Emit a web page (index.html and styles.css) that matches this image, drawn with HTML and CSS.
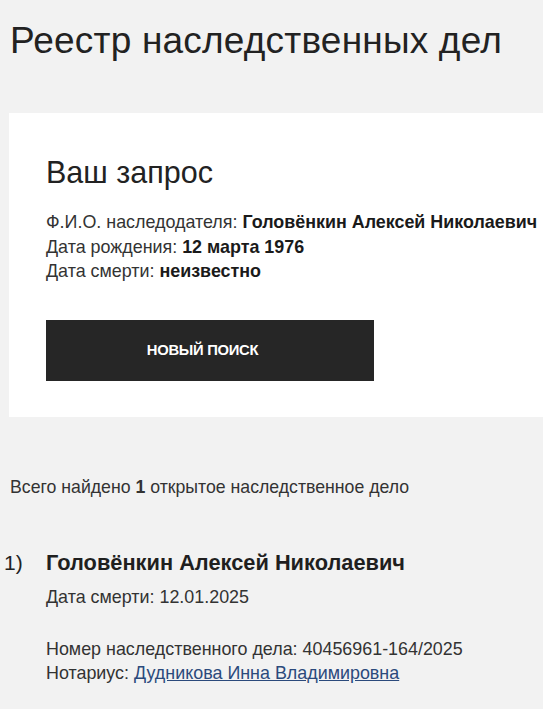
FILE: index.html
```html
<!DOCTYPE html>
<html lang="ru">
<head>
<meta charset="utf-8">
<title>Реестр наследственных дел</title>
<link rel="stylesheet" href="styles.css">
</head>
<body>
<div class="page">
  <h1 class="title">Реестр наследственных дел</h1>
  <section class="card">
    <h2 class="card-title">Ваш запрос</h2>
    <div class="query">
      <div>Ф.И.О. наследодателя: <b>Головёнкин Алексей Николаевич</b></div>
      <div>Дата рождения: <b>12 марта 1976</b></div>
      <div>Дата смерти: <b>неизвестно</b></div>
    </div>
    <button class="btn">НОВЫЙ ПОИСК</button>
  </section>
  <p class="found">Всего найдено <b>1</b> открытое наследственное дело</p>
  <ol class="results">
    <li class="result">
      <span class="num">1)</span>
      <div class="res-body">
        <div class="res-name">Головёнкин Алексей Николаевич</div>
        <div class="res-line">Дата смерти: 12.01.2025</div>
        <div class="res-info">
          <div>Номер наследственного дела: 40456961-164/2025</div>
          <div>Нотариус: <a href="#" class="link">Дудникова Инна Владимировна</a></div>
        </div>
      </div>
    </li>
  </ol>
</div>
</body>
</html>
```

FILE: styles.css
```css
html, body {
  margin: 0;
  padding: 0;
  background: #f2f2f2;
  color: #222;
  font-family: "Liberation Sans", Arial, sans-serif;
  overflow: hidden;
}
.page {
  padding: 0 0 0 9px;
  width: 600px;
}
.title {
  margin: 0;
  padding: 20px 0 0 1px;
  font-size: 37px;
  font-weight: 400;
  letter-spacing: 0.2px;
  line-height: 42px;
  color: #222;
}
.card {
  margin-top: 51px;
  background: #fff;
  padding: 41px 0 36px 37px;
}
.card-title {
  margin: 0;
  font-size: 30.5px;
  font-weight: 400;
  line-height: 36px;
}
.query {
  margin-top: 20px;
  font-size: 17.9px;
  line-height: 24.5px;
  color: #333;
}
.query b {
  color: #1a1a1a;
}
.btn {
  display: block;
  margin-top: 36px;
  width: 328px;
  height: 61px;
  border: none;
  background: #262626;
  color: #fff;
  font-family: "Liberation Sans", Arial, sans-serif;
  font-weight: 700;
  font-size: 14.8px;
  letter-spacing: -0.3px;
  padding: 0 15px 0 0;
}
.found {
  margin: 58px 0 0 1px;
  font-size: 17.7px;
  line-height: 24px;
  color: #333;
}
.results {
  list-style: none;
  margin: 50px 0 0 0;
  padding: 0;
}
.result {
  display: flex;
}
.num {
  flex: none;
  width: 42px;
  margin-left: -5px;
  font-size: 21px;
  line-height: 28px;
  color: #222;
}
.res-name {
  font-size: 21.8px;
  font-weight: 700;
  line-height: 28px;
  color: #1f1f1f;
}
.res-line {
  margin-top: 8px;
  font-size: 17.9px;
  line-height: 24px;
  color: #333;
}
.res-info {
  margin-top: 28px;
  font-size: 17.9px;
  line-height: 24.5px;
  color: #333;
}
.link {
  color: #2b4a7c;
  text-decoration: underline;
}
```
